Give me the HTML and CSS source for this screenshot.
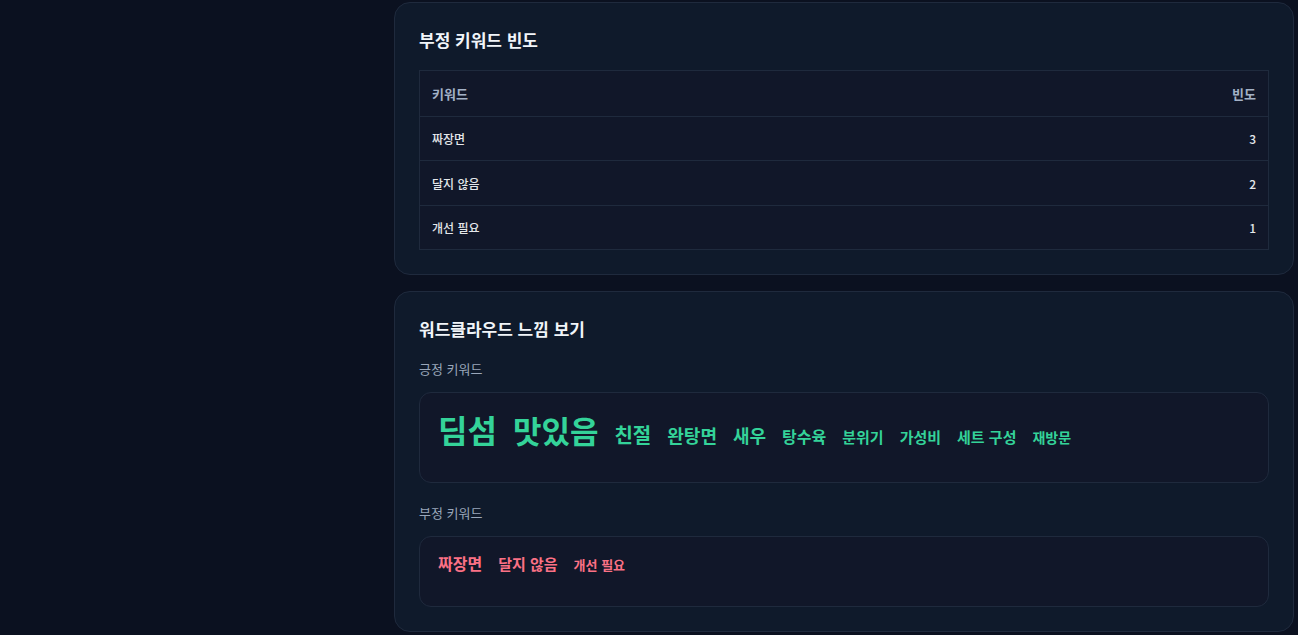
FILE: index.html
```html
<!DOCTYPE html>
<html lang="ko">
<head>
<meta charset="utf-8">
<title>키워드 분석</title>
<link rel="stylesheet" href="styles.css">
</head>
<body>
<div class="layout">
  <aside class="side"></aside>
  <main class="main">
    <section class="card">
      <h2 class="card-title">부정 키워드 빈도</h2>
      <table class="freq">
        <thead>
          <tr><th>키워드</th><th class="num">빈도</th></tr>
        </thead>
        <tbody>
          <tr><td>짜장면</td><td class="num">3</td></tr>
          <tr class="mid"><td>달지 않음</td><td class="num">2</td></tr>
          <tr><td>개선 필요</td><td class="num">1</td></tr>
        </tbody>
      </table>
    </section>
    <section class="card">
      <h2 class="card-title">워드클라우드 느낌 보기</h2>
      <div class="label">긍정 키워드</div>
      <div class="cloud pos">
        <span class="w w32">딤섬</span>
        <span class="w w31">맛있음</span>
        <span class="w w20">친절</span>
        <span class="w w18">완탕면</span>
        <span class="w w18">새우</span>
        <span class="w w16">탕수육</span>
        <span class="w w15">분위기</span>
        <span class="w w15">가성비</span>
        <span class="w w15">세트 구성</span>
        <span class="w w14">재방문</span>
      </div>
      <div class="label">부정 키워드</div>
      <div class="cloud neg">
        <span class="w w16">짜장면</span>
        <span class="w w15">달지 않음</span>
        <span class="w w13">개선 필요</span>
      </div>
    </section>
  </main>
</div>
</body>
</html>
```

FILE: styles.css
```css
* { box-sizing: border-box; }
html, body { margin: 0; padding: 0; }
body {
  background: #0b1120;
  font-family: "Noto Sans CJK KR", "Noto Sans", sans-serif;
  color: #e5e7eb;
}
.layout {
  display: flex;
  padding: 2px 4px 0 0;
}
.side { width: 394px; flex: none; }
.main {
  flex: 1;
  display: flex;
  flex-direction: column;
  gap: 16px;
}
.card {
  background: #0f1a2b;
  border: 1px solid #1f2a3d;
  border-radius: 16px;
  padding: 24px;
}
.card-title {
  margin: 0 0 18px;
  font-size: 17px;
  line-height: 25px;
  font-weight: 700;
  color: #f1f5f9;
}
.freq {
  width: 100%;
  border-collapse: collapse;
  background: #111729;
  border: 1px solid #1f2a3d;
  font-size: 12px;
}
.freq th, .freq td {
  padding: 0 12px;
  text-align: left;
  border-bottom: 1px solid #1f2a3d;
}
.freq th {
  height: 46px;
  font-size: 13px;
  font-weight: 700;
  color: #a3b1c6;
}
.freq td {
  height: 44px;
  color: #e5e7eb;
  font-weight: 500;
}
.freq .mid td { height: 45px; }
.freq .num { text-align: right; }
.label {
  font-size: 13px;
  line-height: 20px;
  color: #9aa7ba;
  margin: 0 0 13px;
}
.cloud {
  display: flex;
  flex-wrap: wrap;
  align-items: baseline;
  gap: 6px 16px;
  background: #111729;
  border: 1px solid #1f2a3d;
  border-radius: 12px;
  padding: 16px 18px 32px;
  margin-bottom: 20px;
}
.cloud:last-child { margin-bottom: 0; }
.w { font-weight: 700; line-height: 1.25; }
.pos .w { color: #34d399; }
.neg .w { color: #fb7185; }
.w32 { font-size: 32px; }
.w31 { font-size: 31px; }
.w20 { font-size: 20px; }
.w18 { font-size: 18px; }
.w16 { font-size: 16px; }
.w15 { font-size: 15px; }
.w14 { font-size: 14px; }
.w13 { font-size: 13px; }
```
